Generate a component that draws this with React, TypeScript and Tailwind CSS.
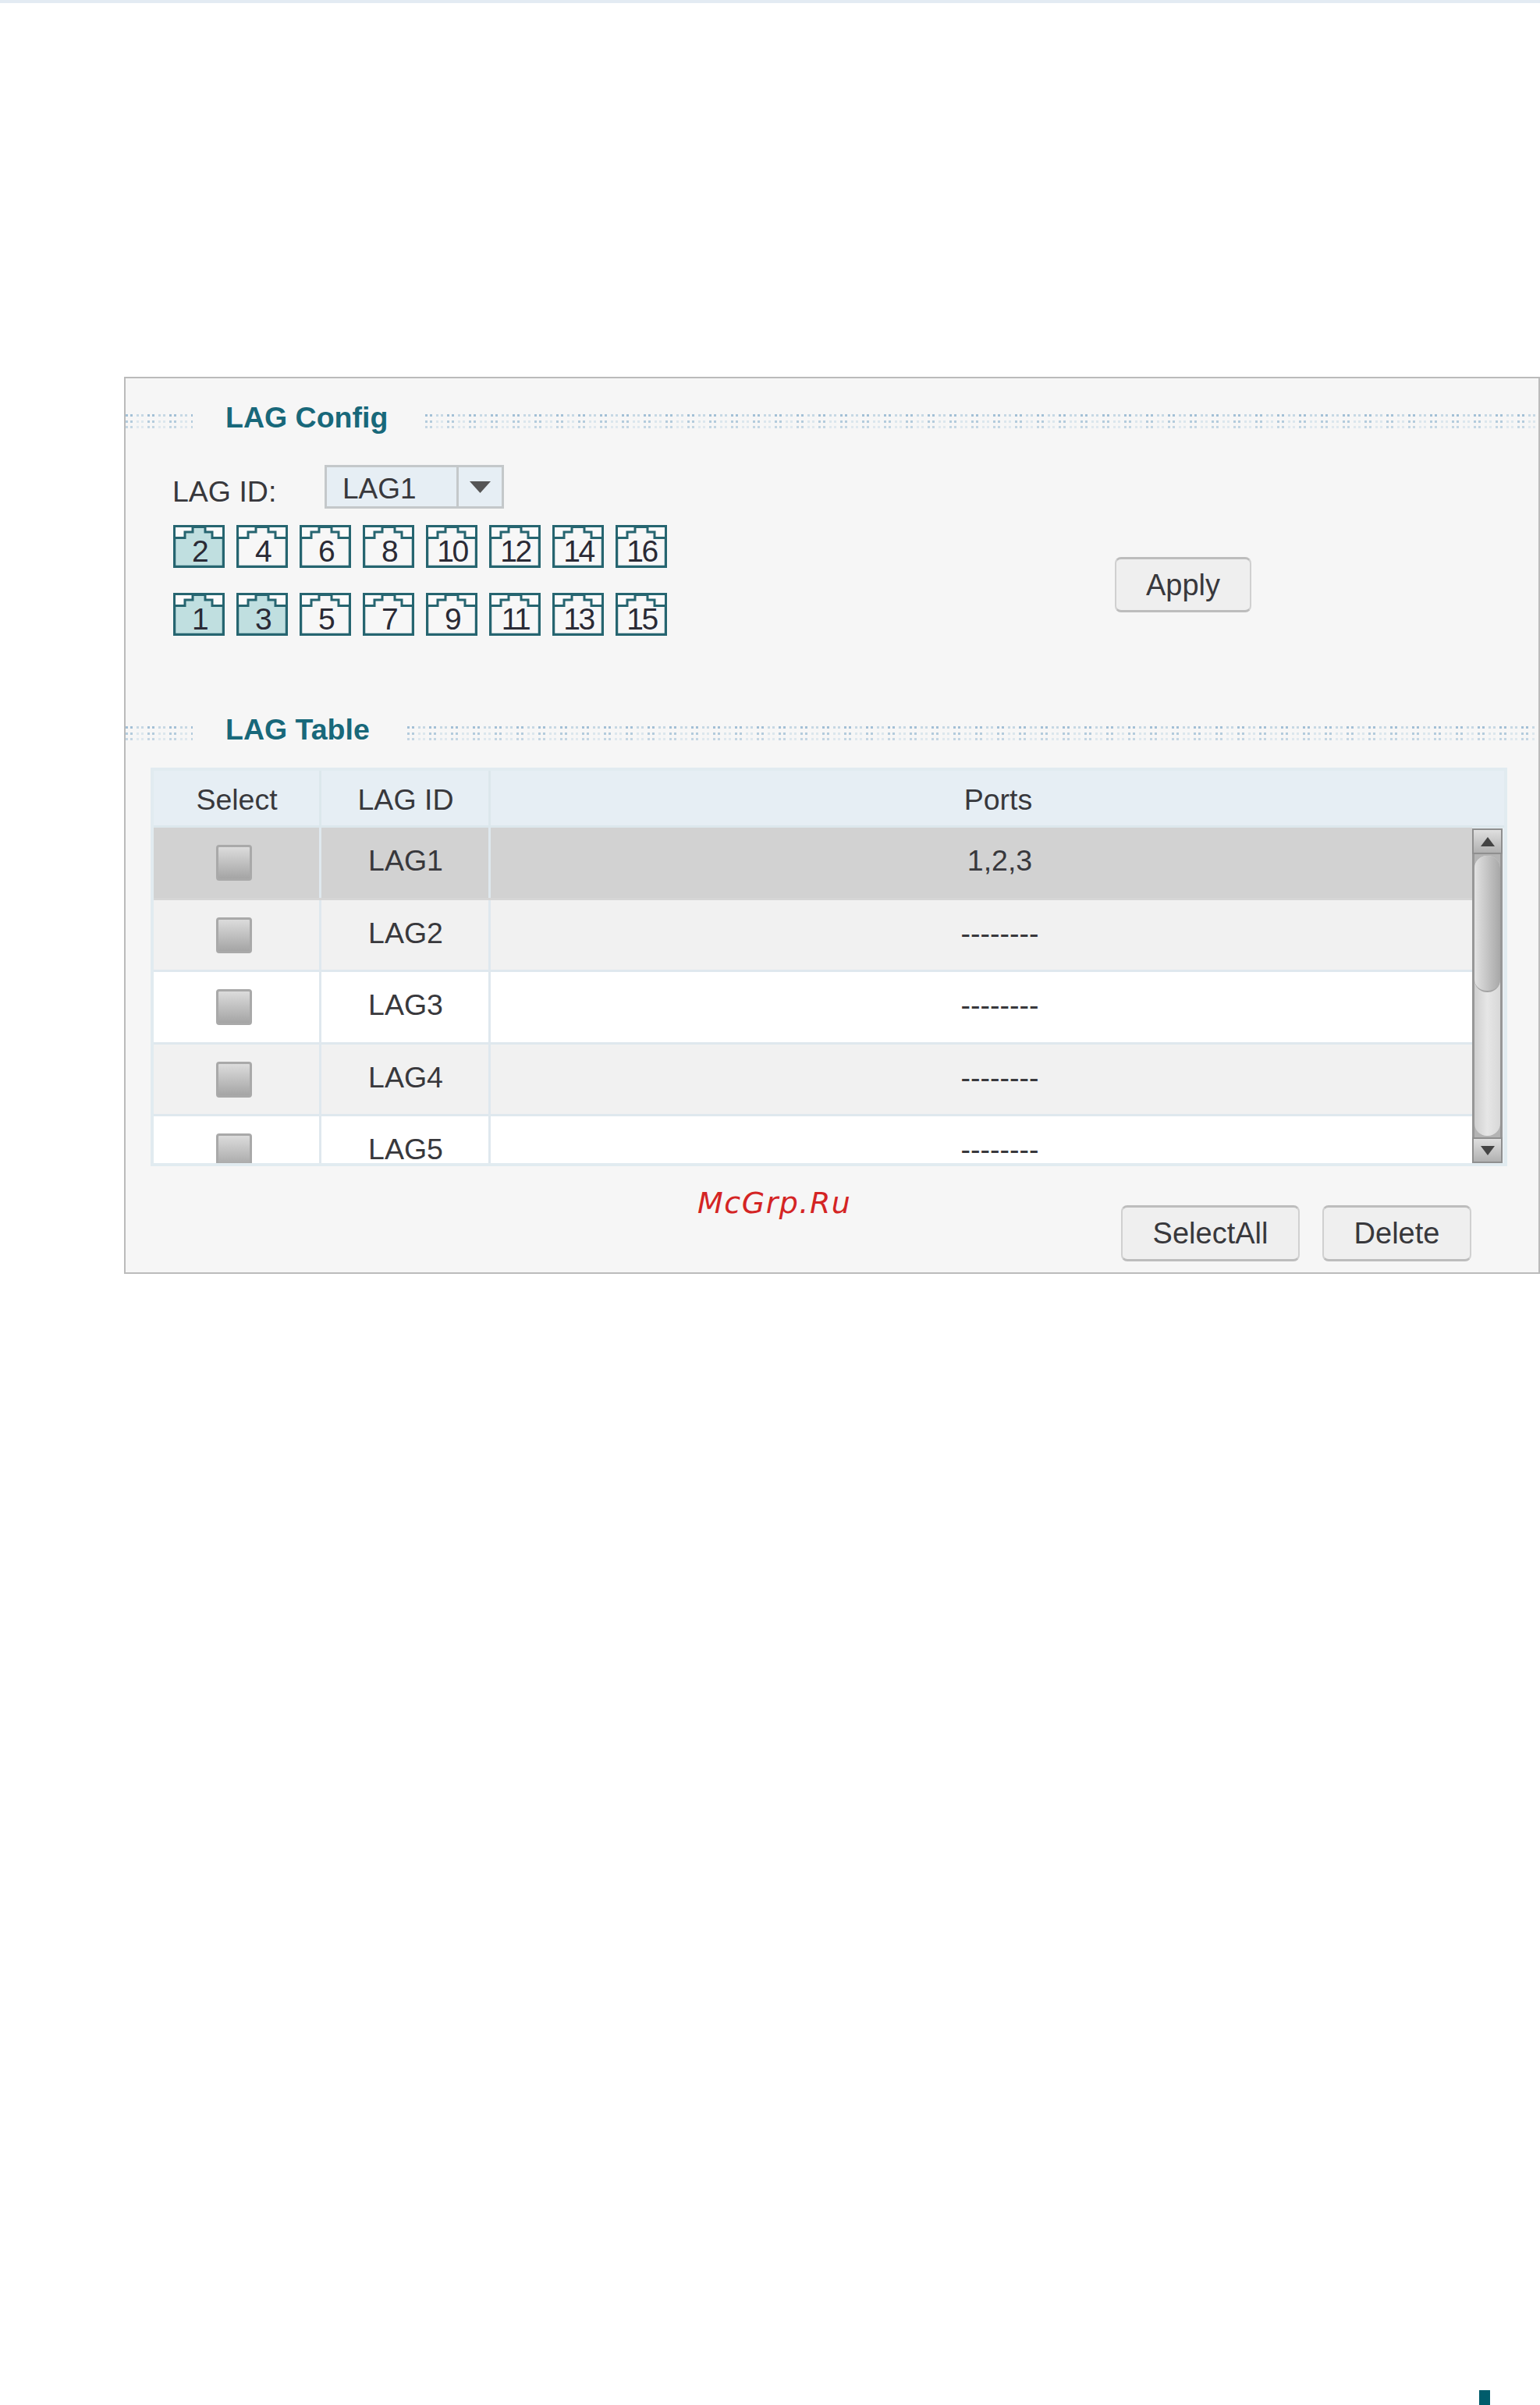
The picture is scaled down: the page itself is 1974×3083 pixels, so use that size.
import clsx from "clsx";

const topPorts = [2, 4, 6, 8, 10, 12, 14, 16];
const bottomPorts = [1, 3, 5, 7, 9, 11, 13, 15];
const selectedPorts = [1, 2, 3];

const lagRows = [
  { id: "LAG1", ports: "1,2,3", bg: "bg-[#d2d2d2] border-b-[#d6d6d6]" },
  { id: "LAG2", ports: "--------", bg: "bg-[#f1f1f1] border-b-[#dfe8ee]" },
  { id: "LAG3", ports: "--------", bg: "bg-white border-b-[#dfe8ee]" },
  { id: "LAG4", ports: "--------", bg: "bg-[#f1f1f1] border-b-[#dfe8ee]" },
  { id: "LAG5", ports: "--------", bg: "bg-white border-b-[#dfe8ee]" },
];

function Dots({ className }: { className?: string }) {
  return (
    <div className={clsx("mt-[17px] flex h-[18px] flex-col justify-between", className)}>
      <div className="h-[3px] bg-[repeating-linear-gradient(90deg,#a3c0d6_0_3px,transparent_3px_6px,#a3c0d6_6px_9px,transparent_9px_14px,#c6d8e4_14px_17px,transparent_17px_20px,#c6d8e4_20px_23px,transparent_23px_28px)]" />
      <div className="h-[3px] bg-[repeating-linear-gradient(90deg,#b3cbdc_0_3px,transparent_3px_6px,#b3cbdc_6px_9px,transparent_9px_14px,#dbe6ed_14px_17px,transparent_17px_20px,#dbe6ed_20px_23px,transparent_23px_28px)]" />
      <div className="h-[3px] bg-[repeating-linear-gradient(90deg,#c4d6e3_0_3px,transparent_3px_6px,#c4d6e3_6px_9px,transparent_9px_14px,#dfe8ee_14px_17px,transparent_17px_20px,#dfe8ee_20px_23px,transparent_23px_28px)]" />
    </div>
  );
}

function SectionTitle({ title }: { title: string }) {
  return (
    <div className="flex h-[44px] items-start">
      <Dots className="w-[86px]" />
      <h2 className="ml-[42px] -mt-px text-[37.5px] leading-[44px] font-bold text-[#18687a]">{title}</h2>
      <Dots className="ml-[48px] mr-[2px] flex-1" />
    </div>
  );
}

function PortIcon({ port }: { port: number }) {
  const selected = selectedPorts.includes(port);
  return (
    <div className="grid h-[55px] w-[66px]">
      <svg viewBox="0 0 66 55" className="col-start-1 row-start-1 h-[55px] w-[66px]">
        <rect x="1.5" y="1.5" width="63" height="52" fill={selected ? "#c0dfe0" : "#f7f7f7"} stroke="#266570" strokeWidth="3.5" />
        <path d="M3 3H25V9H15V16.5H3ZM63 3H41V9H50V16.5H63Z" fill="#fbfbfb" />
        <path d="M1.5 16.5H15V9H25V2.5H41V9H50V16.5H64.5" fill="none" stroke="#266570" strokeWidth="3" />
      </svg>
      <span className="col-start-1 row-start-1 pl-[1px] pt-[12px] text-center text-[39px] leading-[44px] tracking-[-2.5px] text-[#2a2a35]">
        {port}
      </span>
    </div>
  );
}

function PushButton({ label, className }: { label: string; className: string }) {
  return (
    <button className={clsx("rounded-[8px] border-2 border-[#d0d0d0] border-t-[3px] border-t-[#bdbdbd] border-b-[3px] border-b-[#bdbdbd] bg-[#efefef] text-[38px] leading-[44px] text-[#38383c]", className)}>
      {label}
    </button>
  );
}

function ScrollArrow({ up }: { up?: boolean }) {
  return (
    <div className="flex h-[33px] items-center justify-center border-2 border-[#8f8f8f] bg-gradient-to-b from-[#dfdfdf] to-[#b1b1b1]">
      <svg viewBox="0 0 18 12" className="h-[12px] w-[18px]">
        <path d={up ? "M9 0L18 12H0Z" : "M0 0H18L9 12Z"} fill="#444444" />
      </svg>
    </div>
  );
}

function ScrollBar() {
  return (
    <div className="mr-[2px] mt-px flex h-[429px] w-[39px] flex-col bg-[#b4b4b4]">
      <ScrollArrow up />
      <div className="flex flex-1 flex-col border-x-[3px] border-[#979797] py-[2px]">
        <div className="flex-1 rounded-[16px] bg-gradient-to-r from-[#cfcfcf] via-[#e6e6e6] to-[#d8d8d8]">
          <div className="h-[175px] rounded-[16px] border-b-2 border-[#a3a3a3] bg-gradient-to-r from-[#e2e2e2] to-[#a8a8a8]" />
        </div>
      </div>
      <ScrollArrow />
    </div>
  );
}

function LagTable() {
  return (
    <div className="ml-[32px] mt-[26px] flex h-[511px] w-[1739px] flex-col border-4 border-[#e1ebf0] text-[37.5px] leading-[44px] text-[#38383c]">
      <div className="flex h-[73px] border-b-[3px] border-[#dce7ec] bg-[#e6eef4] text-center">
        <div className="w-[215px] border-r-[3px] border-[#dce7ec] pl-[1px] pt-[15px]">Select</div>
        <div className="w-[217px] border-r-[3px] border-[#dce7ec] pl-[2px] pt-[15px]">LAG ID</div>
        <div className="flex-1 pl-[2px] pt-[15px]">Ports</div>
      </div>
      <div className="flex h-[430px] bg-[#e8eff3]">
        <div className="h-[430px] flex-1 overflow-hidden bg-white">
          {lagRows.map((row) => (
            <div key={row.id} className={clsx("flex h-[92.5px] border-b-[3px] text-center", row.bg)}>
              <div className="flex w-[215px] justify-center border-r-[3px] border-[#dfe8ee] pr-[6px] pt-[22px]">
                <input
                  type="checkbox"
                  readOnly
                  className="h-[46px] w-[46px] appearance-none rounded-[4px] border-[3px] border-[#a9a9a9] bg-gradient-to-b from-[#dcdcdc] to-[#a5a5a5]"
                />
              </div>
              <div className="w-[217px] border-r-[3px] border-[#dfe8ee] pl-[2px] pt-[20px]">{row.id}</div>
              <div className="flex-1 pl-[47px] pt-[20px]">{row.ports}</div>
            </div>
          ))}
        </div>
        <ScrollBar />
      </div>
    </div>
  );
}

export default function App() {
  return (
    <div className="flex h-[3083px] flex-col overflow-hidden bg-white font-['Liberation_Sans',Arial,sans-serif]">
      <div className="h-[4px] shrink-0 bg-[#e3ebf3]" />

      <div className="ml-[159px] mt-[479px] h-[1150px] w-[1815px] border-2 border-[#bbbbbb] bg-[#f6f6f6] pt-[29px]">
        <SectionTitle title="LAG Config" />

        <div className="mt-[38px] flex items-start pl-[60px]">
          <label className="mt-[12px] w-[195px] text-[37.5px] leading-[44px] text-[#38383c]">LAG ID:</label>
          <div className="flex h-[56px] w-[230px] items-start border-[3px] border-[#c4c8ca] bg-[#e6eef4] text-[37px] leading-[44px] text-[#38383c]">
            <div className="h-full w-[169px] border-r-[3px] border-[#c4c8ca] pl-[20px] pt-[6px]">LAG1</div>
            <div className="flex h-full flex-1 items-center justify-center">
              <svg viewBox="0 0 27 15" className="h-[15px] w-[27px]">
                <path d="M0 0H27L13.5 15Z" fill="#555555" />
              </svg>
            </div>
          </div>
        </div>

        <div className="mt-[21px] flex items-start pl-[61px]">
          <div className="flex w-[634px] flex-col gap-y-[32px]">
            <div className="flex gap-x-[15px]">
              {topPorts.map((port) => (
                <PortIcon key={port} port={port} />
              ))}
            </div>
            <div className="flex gap-x-[15px]">
              {bottomPorts.map((port) => (
                <PortIcon key={port} port={port} />
              ))}
            </div>
          </div>
          <PushButton label="Apply" className="ml-[573px] mt-[41px] h-[71px] w-[175px]" />
        </div>

        <div className="mt-[99px]">
          <SectionTitle title="LAG Table" />
        </div>
        <LagTable />

        <div className="flex items-start pl-[733px]">
          <span className="mt-[25px] w-[543px] font-['DejaVu_Sans',sans-serif] text-[38px] italic leading-[44px] tracking-[1.5px] text-[#d42424]">
            McGrp.Ru
          </span>
          <PushButton label="SelectAll" className="mt-[50px] h-[72px] w-[229px]" />
          <PushButton label="Delete" className="ml-[29px] mt-[50px] h-[72px] w-[191px]" />
        </div>
      </div>

      <div className="ml-[1896px] mt-auto h-[19px] w-[14px] bg-[#005c6b]" />
    </div>
  );
}
